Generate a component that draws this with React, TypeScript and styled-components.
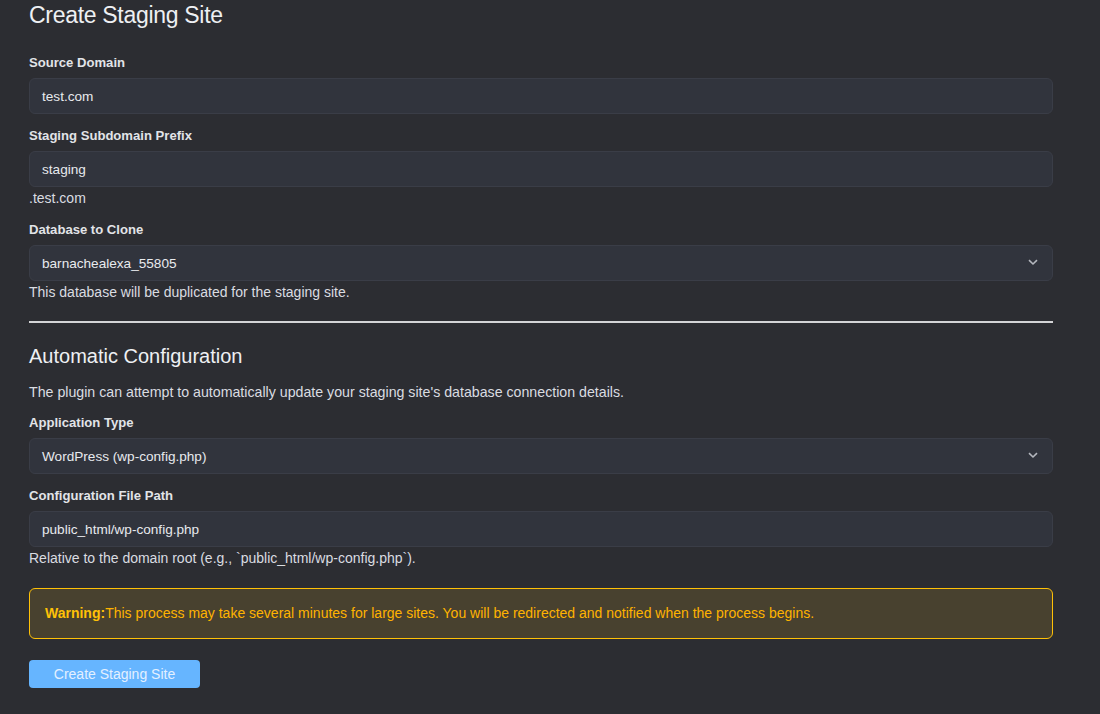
import React from "react";
import styled, { createGlobalStyle } from "styled-components";

const Global = createGlobalStyle`
  html, body { margin: 0; padding: 0; background: #2c2d32; }
  body { font-family: "Liberation Sans", Arial, sans-serif; color: #e6e8ec; }
  * { box-sizing: border-box; }
`;

const Page = styled.div`
  width: 1100px;
  min-height: 714px;
  display: flex;
  flex-direction: column;
  align-items: stretch;
  padding: 0 47px 0 29px;
  background: #2c2d32;
`;

const Title = styled.h1`
  margin: 0 0 23px;
  font-size: 23px;
  letter-spacing: -0.3px;
  line-height: 30px;
  font-weight: 400;
  color: #eef0f3;
`;

const SubTitle = styled.h2`
  margin: 0 0 14px;
  font-size: 20px;
  line-height: 24px;
  font-weight: 400;
  color: #eef0f3;
`;

const Group = styled.div`
  display: flex;
  flex-direction: column;
  margin-bottom: 12px;
`;

const Label = styled.label`
  font-size: 13.1px;
  line-height: 20px;
  font-weight: 700;
  color: #e2e4e8;
  margin-bottom: 5px;
`;

const Field = styled.div`
  position: relative;
  height: 36px;
  display: flex;
  align-items: center;
  padding: 0 12px;
  background: #31343d;
  border: 1px solid #3a3d47;
  border-radius: 6px;
  font-size: 13.6px;
  color: #e8eaee;
`;

const Chevron = styled.svg`
  position: absolute;
  right: 14px;
  top: 50%;
  margin-top: -4px;
`;

const Help = styled.div`
  margin-top: 1px;
  font-size: 14px;
  line-height: 20px;
  color: #dadce1;
`;

const Text = styled.p`
  margin: 0 0 11px;
  font-size: 14.2px;
  line-height: 20px;
  color: #dadce1;
`;

const Rule = styled.hr`
  width: 100%;
  margin: 7px 0 21px;
  border: 0;
  height: 2px;
  background: #d4d4d6;
`;

const Warning = styled.div`
  margin-top: 8px;
  padding: 14px 15px;
  background: #48412f;
  border: 1px solid #ffc107;
  border-radius: 6px;
  font-size: 14px;
  line-height: 21px;
  color: #ffb300;
`;

const Strong = styled.strong`
  font-weight: 700;
  color: #ffc107;
`;

const Button = styled.button`
  align-self: flex-start;
  margin-top: 21px;
  width: 171px;
  height: 28px;
  border: 0;
  border-radius: 4px;
  background: #66b5ff;
  color: #e3f0ff;
  font-family: inherit;
  font-size: 14px;
  padding: 0;
`;

const Select = ({ value }: { value: string }) => (
  <Field>
    {value}
    <Chevron width="10" height="7" viewBox="0 0 10 7">
      <path d="M1 1.2 L5 5 L9 1.2" fill="none" stroke="#b4b7be" strokeWidth="1.6" />
    </Chevron>
  </Field>
);

export default function App() {
  return (
    <>
      <Global />
      <Page>
        <Title>Create Staging Site</Title>
        <Group>
          <Label>Source Domain</Label>
          <Field>test.com</Field>
        </Group>
        <Group>
          <Label>Staging Subdomain Prefix</Label>
          <Field>staging</Field>
          <Help>.test.com</Help>
        </Group>
        <Group>
          <Label>Database to Clone</Label>
          <Select value="barnachealexa_55805" />
          <Help>This database will be duplicated for the staging site.</Help>
        </Group>
        <Rule />
        <SubTitle>Automatic Configuration</SubTitle>
        <Text>The plugin can attempt to automatically update your staging site's database connection details.</Text>
        <Group>
          <Label>Application Type</Label>
          <Select value="WordPress (wp-config.php)" />
        </Group>
        <Group>
          <Label>Configuration File Path</Label>
          <Field>public_html/wp-config.php</Field>
          <Help>Relative to the domain root (e.g., `public_html/wp-config.php`).</Help>
        </Group>
        <Warning>
          <Strong>Warning:</Strong>This process may take several minutes for large sites. You will be redirected and notified when the process begins.
        </Warning>
        <Button>Create Staging Site</Button>
      </Page>
    </>
  );
}
